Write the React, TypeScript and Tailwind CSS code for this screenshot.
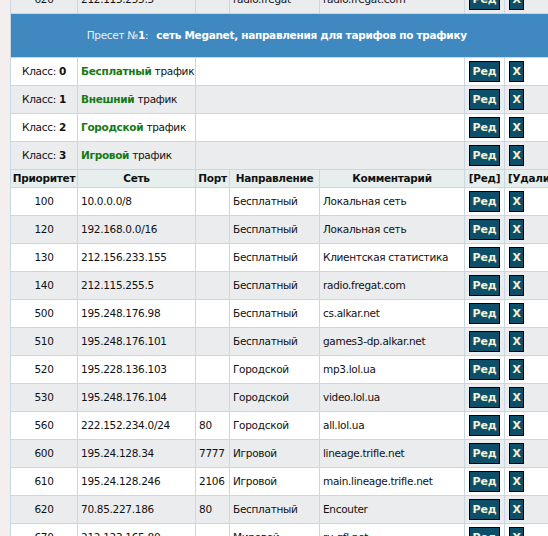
const classes = [
  { id: 0, name: "Бесплатный" },
  { id: 1, name: "Внешний" },
  { id: 2, name: "Городской" },
  { id: 3, name: "Игровой" },
];

const rows = [
  ["100", "10.0.0.0/8", "", "Бесплатный", "Локальная сеть"],
  ["120", "192.168.0.0/16", "", "Бесплатный", "Локальная сеть"],
  ["130", "212.156.233.155", "", "Бесплатный", "Клиентская статистика"],
  ["140", "212.115.255.5", "", "Бесплатный", "radio.fregat.com"],
  ["500", "195.248.176.98", "", "Бесплатный", "cs.alkar.net"],
  ["510", "195.248.176.101", "", "Бесплатный", "games3-dp.alkar.net"],
  ["520", "195.228.136.103", "", "Городской", "mp3.lol.ua"],
  ["530", "195.248.176.104", "", "Городской", "video.lol.ua"],
  ["560", "222.152.234.0/24", "80", "Городской", "all.lol.ua"],
  ["600", "195.24.128.34", "7777", "Игровой", "lineage.trifle.net"],
  ["610", "195.24.128.246", "2106", "Игровой", "main.lineage.trifle.net"],
  ["620", "70.85.227.186", "80", "Бесплатный", "Encouter"],
  ["670", "212.123.165.80", "", "Мировой", "ru.gfl.net"],
];

const td = "border border-[#cbd7e0] px-[3px] h-[28px] align-middle whitespace-nowrap overflow-hidden";

function Buttons() {
  return (
    <>
      <td className={td + " pl-[4px]"}>
        <button className="h-[21px] w-[31px] border border-black bg-[#0d4f68] text-[#f7f1d2] font-bold text-[11px] tracking-[-0.2px] leading-none">
          Ред
        </button>
      </td>
      <td className={td + " pl-[4px]"}>
        <button className="h-[21px] w-[15px] border border-black bg-[#0d4f68] text-[#f7f1d2] font-bold text-[11px] leading-none">
          X
        </button>
      </td>
    </>
  );
}

export default function App() {
  return (
    <div className="w-[548px] h-[536px] overflow-hidden bg-[#f3efee] pl-[10px] font-['DejaVu_Sans',sans-serif] text-[10.5px] tracking-[-0.3px] text-[#111]">
      <table className="-mt-[15px] border-collapse table-fixed w-[556px] border-l border-[#d6d0cf]">
        <colgroup>
          <col className="w-[67px]" />
          <col className="w-[118px]" />
          <col className="w-[34px]" />
          <col className="w-[90px]" />
          <col className="w-[145px]" />
          <col className="w-[40px]" />
          <col className="w-[62px]" />
        </colgroup>
        <tbody>
          <tr className="bg-[#ebecee]">
            <td className={td + " text-center"}>620</td>
            <td className={td}>212.115.255.5</td>
            <td className={td}></td>
            <td className={td}>radio.fregat</td>
            <td className={td}>radio.fregat.com</td>
            <Buttons />
          </tr>
          <tr className="bg-[#3f88c0]">
            <td colSpan={7} className="h-[44px] text-center text-white pr-[24px] whitespace-nowrap">
              <span className="text-[#e8f0f8]">Пресет №</span>
              <b>1</b>
              <span className="text-[#e8f0f8]">:</span>
              <span className="font-bold ml-[8px]">сеть Meganet, направления для тарифов по трафику</span>
            </td>
          </tr>
          {classes.map((c) => (
            <tr key={c.id} className={c.id % 2 ? "bg-[#ebecee]" : "bg-white"}>
              <td className={td + " text-center"}>
                Класс: <b>{c.id}</b>
              </td>
              <td className={td}>
                <b className="text-[#157a15]">{c.name}</b> трафик
              </td>
              <td className={td} colSpan={3}></td>
              <Buttons />
            </tr>
          ))}
          <tr className="bg-[#e7efee] font-bold">
            <td className="border border-[#cbd7e0] h-[18px] text-center whitespace-nowrap overflow-hidden">Приоритет</td>
            <td className="border border-[#cbd7e0] text-center">Сеть</td>
            <td className="border border-[#cbd7e0] text-center">Порт</td>
            <td className="border border-[#cbd7e0] text-center whitespace-nowrap overflow-hidden">Направление</td>
            <td className="border border-[#cbd7e0] text-center">Комментарий</td>
            <td className="border border-[#cbd7e0] text-center">[Ред]</td>
            <td className="border border-[#cbd7e0] pl-[3px] whitespace-nowrap overflow-hidden">[Удалить]</td>
          </tr>
          {rows.map((r, i) => (
            <tr key={r[0]} className={i % 2 ? "bg-[#ebecee]" : "bg-white"}>
              <td className={td + " text-center"}>{r[0]}</td>
              <td className={td}>{r[1]}</td>
              <td className={td}>{r[2]}</td>
              <td className={td}>{r[3]}</td>
              <td className={td}>{r[4]}</td>
              <Buttons />
            </tr>
          ))}
        </tbody>
      </table>
    </div>
  );
}
